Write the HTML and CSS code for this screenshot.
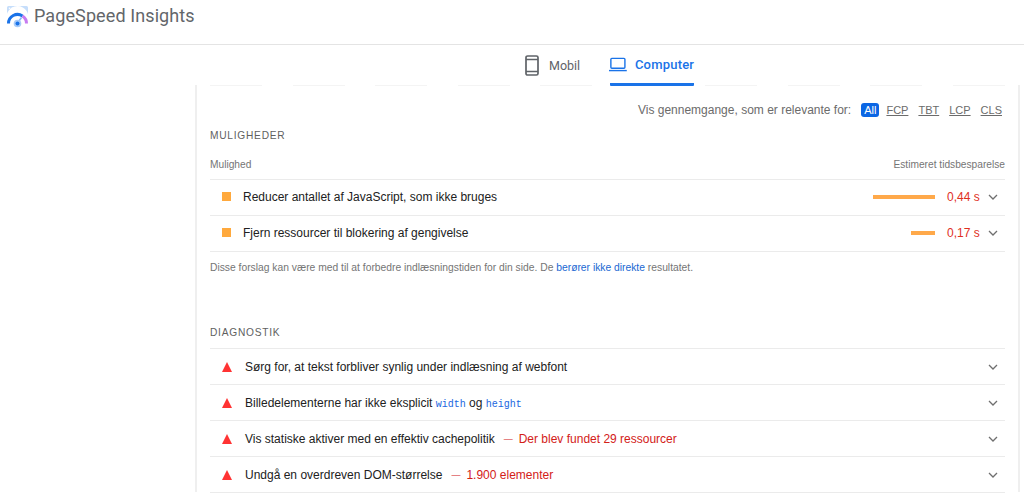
FILE: index.html
```html
<!DOCTYPE html>
<html lang="da">
<head>
<meta charset="utf-8">
<title>PageSpeed Insights</title>
<link rel="stylesheet" href="styles.css">
</head>
<body>
<header class="topbar">
  <svg class="logo" viewBox="0 0 22 22" width="22" height="22" aria-hidden="true">
    <path d="M0 1.5A1.5 1.5 0 0 1 1.500 0h18A1.500 1.500 0 0 1 21 1.500V8A10.500 10.500 0 0 0 0 14z" fill="#c6defb"/>
    <circle cx="2.500" cy="2.200" r=".8" fill="#fff"/><circle cx="5.200" cy="2.200" r=".8" fill="#fff"/>
    <path d="M1.500 17.500A9 9 0 0 1 15.500 10" fill="none" stroke="#1a73e8" stroke-width="3"/>
    <path d="M15.500 10A9 9 0 0 1 19.500 17.500" fill="none" stroke="#c77bf0" stroke-width="3"/>
    <path d="M10.500 17L14.500 11.500" stroke="#8ab8f5" stroke-width="1.600"/>
    <circle cx="10.500" cy="17.500" r="3.800" fill="#a8cbf8"/><circle cx="10.500" cy="17.500" r="2" fill="#1a73e8"/>
  </svg>
  <span class="brand">PageSpeed Insights</span>
</header>

<nav class="tabs">
  <a class="tab">
    <svg class="tab-icon" viewBox="0 0 14 21" width="14" height="21" aria-hidden="true">
      <rect x="1" y="1" width="12" height="19" rx="1.600" fill="none" stroke="#5f6368" stroke-width="1.700"/>
      <path d="M1 4.500h12M1 16.500h12" stroke="#5f6368" stroke-width="1.700"/>
    </svg>
    <span>Mobil</span>
  </a>
  <a class="tab tab-active">
    <svg class="tab-icon" viewBox="0 0 19 15" width="19" height="15" aria-hidden="true">
      <rect x="2" y="1" width="15" height="10.500" rx="1" fill="none" stroke="#1a73e8" stroke-width="1.500"/>
      <path d="M0 14h19" stroke="#1a73e8" stroke-width="1.500"/>
    </svg>
    <span>Computer</span>
  </a>
</nav>

<main class="card">
  <div class="ticks" aria-hidden="true"><i></i><i></i><i></i><i></i><i></i><i></i><i></i><i></i><i></i><i></i></div>
  <div class="filter">
    <span class="filter-label">Vis gennemgange, som er relevante for:</span>
    <span class="chip chip-on">All</span>
    <span class="chip">FCP</span>
    <span class="chip">TBT</span>
    <span class="chip">LCP</span>
    <span class="chip">CLS</span>
  </div>

  <h2 class="section-title">Muligheder</h2>
  <div class="col-head"><span>Mulighed</span><span>Estimeret tidsbesparelse</span></div>
  <ul class="rows">
    <li class="row row-opp">
      <i class="square"></i>
      <span class="row-title">Reducer antallet af JavaScript, som ikke bruges</span>
      <i class="bar bar-long"></i>
      <span class="value">0,44 s</span>
      <svg class="chev" viewBox="0 0 10 6" width="10" height="6" aria-hidden="true"><path d="M1 1l4 4 4-4" fill="none" stroke="#6f6f6f" stroke-width="1.300"/></svg>
    </li>
    <li class="row row-opp">
      <i class="square"></i>
      <span class="row-title">Fjern ressourcer til blokering af gengivelse</span>
      <i class="bar bar-short"></i>
      <span class="value">0,17 s</span>
      <svg class="chev" viewBox="0 0 10 6" width="10" height="6" aria-hidden="true"><path d="M1 1l4 4 4-4" fill="none" stroke="#6f6f6f" stroke-width="1.300"/></svg>
    </li>
  </ul>
  <p class="note">Disse forslag kan være med til at forbedre indlæsningstiden for din side. De <a class="link">berører ikke direkte</a> resultatet.</p>

  <h2 class="section-title section-diag">Diagnostik</h2>
  <ul class="rows">
    <li class="row">
      <i class="triangle"></i>
      <span class="row-title">Sørg for, at tekst forbliver synlig under indlæsning af webfont</span>
      <svg class="chev" viewBox="0 0 10 6" width="10" height="6" aria-hidden="true"><path d="M1 1l4 4 4-4" fill="none" stroke="#6f6f6f" stroke-width="1.300"/></svg>
    </li>
    <li class="row">
      <i class="triangle"></i>
      <span class="row-title">Billedelementerne har ikke eksplicit <code>width</code> og <code>height</code></span>
      <svg class="chev" viewBox="0 0 10 6" width="10" height="6" aria-hidden="true"><path d="M1 1l4 4 4-4" fill="none" stroke="#6f6f6f" stroke-width="1.300"/></svg>
    </li>
    <li class="row">
      <i class="triangle"></i>
      <span class="row-title">Vis statiske aktiver med en effektiv cachepolitik</span>
      <span class="dash">—</span><span class="detail">Der blev fundet 29 ressourcer</span>
      <svg class="chev" viewBox="0 0 10 6" width="10" height="6" aria-hidden="true"><path d="M1 1l4 4 4-4" fill="none" stroke="#6f6f6f" stroke-width="1.300"/></svg>
    </li>
    <li class="row">
      <i class="triangle"></i>
      <span class="row-title">Undgå en overdreven DOM-størrelse</span>
      <span class="dash">—</span><span class="detail">1.900 elementer</span>
      <svg class="chev" viewBox="0 0 10 6" width="10" height="6" aria-hidden="true"><path d="M1 1l4 4 4-4" fill="none" stroke="#6f6f6f" stroke-width="1.300"/></svg>
    </li>
  </ul>
</main>
</body>
</html>
```
FILE: styles.css
```css
* { box-sizing: border-box; }
html, body { margin: 0; padding: 0; height: 493px; overflow: hidden; background: #fff; }
body { font-family: "Liberation Sans", Arial, sans-serif; color: #212121; }

.topbar {
  display: flex;
  align-items: flex-start;
  gap: 5px;
  height: 45px;
  padding: 5px 0 0 7px;
  border-bottom: 1px solid #e4e4e4;
}
.logo { display: block; margin-top: 1px; }
.brand { font-family: Roboto, sans-serif; font-size: 18px; line-height: 21px; color: #63666a; letter-spacing: .1px; }

.tabs {
  display: flex;
  position: relative;
  z-index: 1;
  height: 41px;
  padding-left: 525px;
  gap: 29px;
}
.tab {
  display: flex;
  align-items: center;
  gap: 10px;
  height: 41px;
  font-family: Roboto, sans-serif;
  font-size: 12.5px;
  color: #5f6368;
}
.tab-active {
  width: 84px;
  margin-left: 1px;
  gap: 8px;
  font-size: 13px;
  color: #1a73e8;
  font-weight: 500;
  border-bottom: 3px solid #1a73e8;
  border-radius: 0 0 1px 1px;
  padding-top: 1px;
}
.tab-active .tab-icon { margin-left: -1px; }
.tab-active span { letter-spacing: .2px; white-space: nowrap; }

.card {
  width: 825px;
  height: 407px;
  margin-left: 195px;
  padding: 0 13px;
  border-left: 2px solid #efefef;
  border-right: 2px solid #efefef;
}
.ticks { display: flex; justify-content: space-between; height: 1px; margin-top: -1px; }
.ticks i { width: 52px; height: 1px; background: #f4f4f4; }

.filter { display: flex; justify-content: flex-end; align-items: center; gap: 10px; height: 14px; margin-top: 17px; padding-right: 3px; font-size: 12px; color: #6b6b6b; }
.chip { text-decoration: underline; font-size: 11px; line-height: 14px; color: #6b6b6b; }
.chip-on { background: #0b66e4; color: #fff; text-decoration: none; border-radius: 3px; padding: 0 3px; margin-right: -3px; }

.section-title { margin: 0; font-size: 10.2px; line-height: 12px; font-weight: 400; letter-spacing: .75px; text-transform: uppercase; color: #5f5f5f; padding-top: 13px; }
.col-head { display: flex; justify-content: space-between; margin-top: 16px; height: 21px; padding-bottom: 5px; font-size: 10.2px; line-height: 13px; color: #757575; }

.rows { list-style: none; margin: 0; padding: 0; }
.row { display: flex; align-items: center; flex: none; height: 36px; border-top: 1px solid #ebebeb; font-size: 12px; padding-left: 12px; padding-right: 7px; }
.row:last-child { height: 37px; border-bottom: 1px solid #ebebeb; }
.row-opp { padding-bottom: 2px; }
.square { width: 9px; height: 9px; background: #ffa93d; margin-right: 12px; flex: none; }
.triangle { width: 0; height: 0; border-left: 5.5px solid transparent; border-right: 5.5px solid transparent; border-bottom: 10px solid #ff3333; margin-right: 13px; flex: none; }
.row-title { margin-right: auto; color: #212121; }
.row:has(.detail) .row-title { margin-right: 9px; }
.dash { color: #d32018; font-size: 9px; margin-right: 6px; }
.detail { color: #d32018; margin-right: auto; }
.bar { height: 4px; background: #ffa94a; flex: none; margin-right: 12px; }
.bar-long { width: 62px; }
.bar-short { width: 24px; }
.value { color: #e0301e; width: 33px; margin-right: 8px; font-size: 12px; white-space: nowrap; }
.chev { flex: none; }
code { font-family: "Liberation Mono", monospace; font-size: 10px; color: #1a66e0; }

.note { margin: 9px 0 0; font-size: 10.3px; line-height: 13px; color: #757575; }
.link { color: #1967d2; }
.section-diag { padding-top: 53px; padding-bottom: 9px; }
```
